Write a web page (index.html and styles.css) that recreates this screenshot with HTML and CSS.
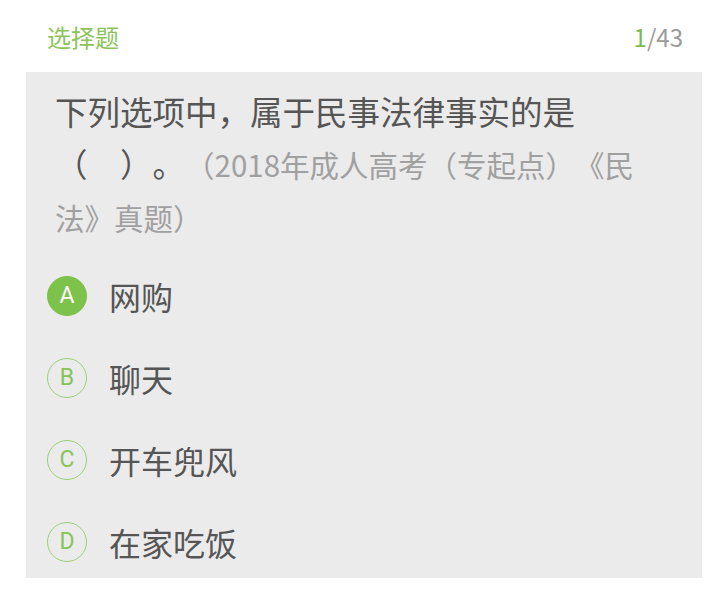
FILE: index.html
```html
<!DOCTYPE html>
<html lang="zh-CN">
<head>
    <meta charset="UTF-8">
    <meta name="viewport" content="width=device-width, initial-scale=1.0">
    <title>选择题</title>
    <link rel="stylesheet" href="styles.css">
</head>
<body>
    <header class="topbar">
        <span class="type">选择题</span>
        <span class="progress"><em>1</em>/43</span>
    </header>

    <div class="card">
        <p class="question">下列选项中，属于民事法律事实的是（　）。<span class="source">（2018年成人高考（专起点）《民法》真题）</span></p>

        <ul class="options">
            <li class="option selected"><span class="letter">A</span>网购</li>
            <li class="option"><span class="letter">B</span>聊天</li>
            <li class="option"><span class="letter">C</span>开车兜风</li>
            <li class="option"><span class="letter">D</span>在家吃饭</li>
        </ul>
    </div>
</body>
</html>
```

FILE: styles.css
```css
body {
    margin: 0;
    padding: 0;
    background-color: #fff;
    font-family: "Noto Sans CJK SC", "Noto Sans", sans-serif;
    color: #555;
    text-spacing-trim: space-all;
}

.topbar {
    display: flex;
    justify-content: space-between;
    align-items: center;
    height: 72px;
    padding: 0 37px 0 47px;
    font-size: 24px;
}

.type {
    color: #8cc45c;
}

.progress {
    color: #9a9a9a;
}

.progress em {
    font-style: normal;
    color: #7cb950;
}

.card {
    margin: 0 18px 0 26px;
    padding: 13px 57px 16px 21px;
    background-color: #ebebeb;
}

.question {
    margin: 0 0 0 8px;
    font-size: 32.5px;
    line-height: 52px;
    color: #555;
}

.source {
    font-size: 29.5px;
    color: #a0a0a0;
}

.options {
    list-style: none;
    margin: 32px 0 0;
    padding: 0;
    display: flex;
    flex-direction: column;
    gap: 41px;
}

.option {
    display: flex;
    align-items: center;
    gap: 22px;
    height: 41px;
    font-size: 32px;
    color: #555;
}

.letter {
    display: flex;
    align-items: center;
    justify-content: center;
    flex-shrink: 0;
    width: 38px;
    height: 38px;
    border: 1.5px solid #9ccf74;
    border-radius: 50%;
    font-family: Roboto, "Noto Sans", sans-serif;
    font-size: 23px;
    color: #86c35a;
}

.selected .letter {
    background-color: #7dc24b;
    border-color: #7dc24b;
    color: #fff;
}
```
